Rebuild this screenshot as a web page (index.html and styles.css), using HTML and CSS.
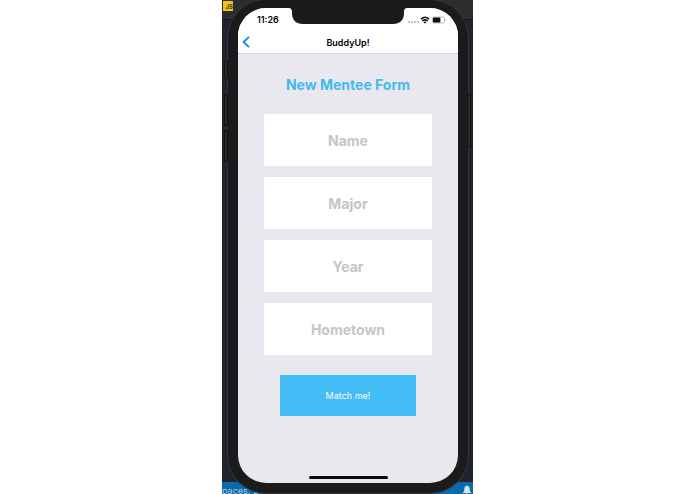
FILE: index.html
```
<!DOCTYPE html>
<html lang="en">
<head>
<meta charset="utf-8">
<title>BuddyUp!</title>
<link rel="stylesheet" href="styles.css">
</head>
<body>
<div class="desktop">
  <div class="tabstrip"><span class="js">JS</span></div>
  <div class="editorbar">
    <span>paces: 2</span>
    <svg class="bell" viewBox="0 0 10 10" aria-hidden="true"><path d="M5 0.5C3 1 2.3 2.5 2.3 4.5C2.3 6.3 1.5 7 0.5 8H9.5C8.5 7 7.7 6.3 7.7 4.5C7.7 2.5 7 1 5 0.5ZM3.8 8.6H6.2L5 9.8Z" fill="#d5e8f5"/></svg>
  </div>

  <div class="phone">
    <i class="key mute"></i>
    <i class="key up"></i>
    <i class="key down"></i>
    <i class="key power"></i>

    <div class="screen">
      <svg class="notch" viewBox="0 0 120 16" aria-hidden="true"><path d="M0 0H120C117 0 116 1 116 4V5C116 12 112 16 105 16H15C8 16 4 12 4 5V4C4 1 3 0 0 0Z" fill="#1b1b1b"/></svg>

      <header class="top">
        <div class="status">
          <span class="time">11:26</span>
          <svg class="signal" viewBox="0 0 40 10" aria-hidden="true">
            <g fill="#c4c4c6"><rect x="1" y="6" width="2" height="2"/><rect x="4" y="6" width="2" height="2"/><rect x="7" y="6" width="2" height="2"/><rect x="10" y="6" width="2" height="2"/></g>
            <g fill="none" stroke="#111" stroke-width="1.5"><path d="M14 4.1Q18 0.3 22 4.1"/><path d="M15.3 6Q18 3.7 20.7 6"/></g>
            <path d="M16.5 7.1Q18 6 19.5 7.1L18 8.7Z" fill="#111"/>
            <rect x="25.5" y="2" width="12" height="6" rx="1.5" fill="#fff" stroke="#aaa" stroke-width="0.8"/>
            <rect x="26" y="2.4" width="7.4" height="5.2" rx="0.7" fill="#111"/>
            <path d="M38.4 4Q39.8 5 38.4 6.2Z" fill="#aaa"/>
          </svg>
        </div>
        <nav class="nav">
          <button class="back" type="button" aria-label="Back">
            <svg viewBox="0 0 8 12" aria-hidden="true"><path d="M7 0.8L1.6 6L7 11.2" fill="none" stroke="#1a80ea" stroke-width="1.8"/></svg>
          </button>
          <h1 class="title">BuddyUp!</h1>
        </nav>
      </header>

      <form class="form">
        <h2 class="heading">New Mentee Form</h2>
        <input class="field" type="text" name="name" placeholder="Name" aria-label="Name">
        <input class="field" type="text" name="major" placeholder="Major" aria-label="Major">
        <input class="field" type="text" name="year" placeholder="Year" aria-label="Year">
        <input class="field" type="text" name="hometown" placeholder="Hometown" aria-label="Hometown">
        <button class="match" type="button">Match me!</button>
      </form>

      <div class="home"></div>
    </div>
  </div>
</div>
</body>
</html>
```
FILE: styles.css
```
* { box-sizing: border-box; }

body {
  margin: 0;
  background: #fff;
  font-family: Inter, "Liberation Sans", sans-serif;
}

.desktop {
  position: relative;
  max-width: 251px;
  min-height: 100vh;
  margin: 0 auto;
  padding: 0 5px 1px 6px;
  background: #20252d;
  overflow: hidden;
  display: flex;
}

/* editor window behind the phone */
.tabstrip {
  position: absolute;
  top: 0;
  left: 0;
  right: 0;
  height: 20px;
  padding: 1px;
  background: #2c2d2f;
  border-bottom: 1px solid #16191d;
}
.js {
  display: block;
  width: 10px;
  height: 10px;
  background: #f3c31c;
  color: #4a3c08;
  font-size: 6px;
  font-weight: 700;
  line-height: 12px;
  text-align: right;
}
.editorbar {
  position: absolute;
  bottom: 0;
  left: 0;
  right: 0;
  height: 12px;
  display: flex;
  justify-content: space-between;
  background: #0b69ad;
  color: #a9cbe5;
  font-size: 9px;
  line-height: 17px;
}
.bell { width: 12px; height: 10px; margin-top: 3px; }

.phone {
  position: relative;
  flex: 1;
  display: flex;
  background: #1b1b1b;
  border: solid #1b1b1b;
  border-width: 8px 10px 10px;
  border-radius: 38px;
  box-shadow: 0 0 0 1px #30343a;
}

.key {
  position: absolute;
  left: -14px;
  width: 4px;
  background: #292a2c;
  border: 1px solid #111316;
}
.mute { top: 52px; height: 19px; }
.up { top: 86px; height: 32px; }
.down { top: 122px; height: 32px; }
.power { top: 86px; height: 54px; left: auto; right: -13px; }

.screen {
  position: relative;
  flex: 1;
  display: flex;
  flex-direction: column;
  background: #e9e8ef;
  border-radius: 28px;
  overflow: hidden;
}
.notch {
  position: absolute;
  top: 0;
  left: 50%;
  width: 120px;
  height: 16px;
  margin-left: -60px;
}

.top {
  background: #fff;
  border-bottom: 1px solid #d5d5da;
}
.status {
  display: flex;
  justify-content: space-between;
  align-items: center;
  height: 23px;
  padding: 0 11px 0 19px;
}
.time { font-size: 9px; font-weight: 600; }
.signal { width: 40px; height: 10px; }

.nav {
  display: grid;
  grid-template-columns: 16px 1fr 16px;
  align-items: center;
  height: 22px;
}
.back {
  width: 16px;
  height: 20px;
  padding: 4px;
  border: 0;
  background: none;
}
.back svg { display: block; width: 8px; height: 12px; }
.title {
  margin: 0;
  font-size: 9px;
  font-weight: 600;
  text-align: center;
}

.form {
  flex: 1;
  display: flex;
  flex-direction: column;
  gap: 11px;
  padding: 21px 26px 0;
}
.heading {
  margin: 0 0 8px;
  color: #45b8ec;
  font-size: 14px;
  font-weight: 700;
  line-height: 20px;
  text-align: center;
}
.field {
  width: 100%;
  height: 52px;
  padding: 0;
  border: 0;
  border-radius: 0;
  background: #fff;
  color: #333;
  font: 700 14px Inter, "Liberation Sans", sans-serif;
  text-align: center;
}
.field::placeholder { color: #c5c5c9; opacity: 1; }
.match {
  height: 41px;
  margin: 9px 16px 0;
  border: 0;
  background: #43bdf5;
  color: #fff;
  font: 400 9px Inter, "Liberation Sans", sans-serif;
}

.home {
  width: 79px;
  height: 3px;
  margin: 0 auto 4px;
  border-radius: 2px;
  background: #080808;
}
```
